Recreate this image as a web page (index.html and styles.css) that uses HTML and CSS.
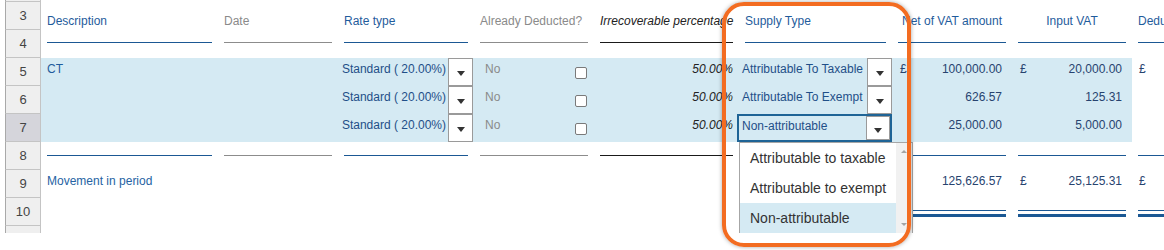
FILE: index.html
```html
<!DOCTYPE html>
<html>
<head>
<meta charset="utf-8">
<link rel="stylesheet" href="styles.css">
</head>
<body>
<div class="sheet">
  <div class="row top"><div class="rh"></div></div>

  <div class="row">
    <div class="rh">3</div>
    <div class="cells">
      <div class="hd blue">Description</div>
      <div class="hd gray">Date</div>
      <div class="hd blue">Rate type</div>
      <div class="hd gray">Already Deducted?</div>
      <div class="hd black it">Irrecoverable percentage</div>
      <div class="hd blue">Supply Type</div>
      <div class="hd blue center">Net of VAT amount</div>
      <div class="hd blue center">Input VAT</div>
      <div class="hd blue center">Deductible Input VAT</div>
    </div>
  </div>

  <div class="row">
    <div class="rh">4</div>
    <div class="cells">
      <div class="ul u-blue"></div>
      <div class="ul u-gray"></div>
      <div class="ul u-blue"></div>
      <div class="ul u-gray"></div>
      <div class="ul u-black"></div>
      <div class="ul u-blue"></div>
      <div class="ul u-blue"></div>
      <div class="ul u-blue"></div>
      <div class="ul u-blue"></div>
    </div>
  </div>

  <div class="row hl">
    <div class="rh">5</div>
    <div class="cells">
      <div class="dc desc">CT</div>
      <div class="dc"></div>
      <div class="rate"><span class="rtext">Standard ( 20.00%)</span><span class="btn"></span></div>
      <div class="ded"><span class="no">No</span><span class="chk"></span></div>
      <div class="dc pct">50.00%</div>
      <div class="sup"><span class="stext">Attributable To Taxable</span><span class="btn"></span></div>
      <div class="amt"><span>£</span><span>100,000.00</span></div>
      <div class="amt"><span>£</span><span>20,000.00</span></div>
      <div class="amt last"><span>£</span><span></span></div>
    </div>
  </div>

  <div class="row hl">
    <div class="rh">6</div>
    <div class="cells">
      <div class="dc desc"></div>
      <div class="dc"></div>
      <div class="rate"><span class="rtext">Standard ( 20.00%)</span><span class="btn"></span></div>
      <div class="ded"><span class="no">No</span><span class="chk"></span></div>
      <div class="dc pct">50.00%</div>
      <div class="sup"><span class="stext">Attributable To Exempt</span><span class="btn"></span></div>
      <div class="amt"><span></span><span>626.57</span></div>
      <div class="amt"><span></span><span>125.31</span></div>
      <div class="amt last"></div>
    </div>
  </div>

  <div class="row hl">
    <div class="rh sel">7</div>
    <div class="cells">
      <div class="dc desc"></div>
      <div class="dc"></div>
      <div class="rate"><span class="rtext">Standard ( 20.00%)</span><span class="btn"></span></div>
      <div class="ded"><span class="no">No</span><span class="chk"></span></div>
      <div class="dc pct">50.00%</div>
      <div class="sup focus"><span class="stext">Non-attributable</span><span class="btn"></span></div>
      <div class="amt"><span></span><span>25,000.00</span></div>
      <div class="amt"><span></span><span>5,000.00</span></div>
      <div class="amt last"></div>
    </div>
  </div>

  <div class="row">
    <div class="rh">8</div>
    <div class="cells">
      <div class="ul ul8 u-blue"></div>
      <div class="ul ul8 u-gray"></div>
      <div class="ul ul8 u-blue"></div>
      <div class="ul ul8 u-gray"></div>
      <div class="ul ul8 u-black"></div>
      <div class="ul ul8 u-blue"></div>
      <div class="ul ul8 u-blue"></div>
      <div class="ul ul8 u-blue"></div>
      <div class="ul ul8 u-blue"></div>
    </div>
  </div>

  <div class="row">
    <div class="rh">9</div>
    <div class="cells">
      <div class="dc desc mv">Movement in period</div>
      <div class="dc"></div>
      <div class="dc"></div>
      <div class="dc"></div>
      <div class="dc"></div>
      <div class="dc"></div>
      <div class="amt"><span>£</span><span>125,626.57</span></div>
      <div class="amt"><span>£</span><span>25,125.31</span></div>
      <div class="amt last"><span>£</span><span></span></div>
    </div>
  </div>

  <div class="row">
    <div class="rh">10</div>
    <div class="cells">
      <div></div><div></div><div></div><div></div><div></div><div></div>
      <div class="dbl"></div>
      <div class="dbl"></div>
      <div class="dbl"></div>
    </div>
  </div>

  <div class="row bottom"><div class="rh"></div></div>

  <div class="dd">
    <div class="items">
      <div class="item">Attributable to taxable</div>
      <div class="item">Attributable to exempt</div>
      <div class="item on">Non-attributable</div>
    </div>
    <div class="sb"><span class="up"></span><span class="down"></span></div>
  </div>

  <div class="callout"></div>
</div>
</body>
</html>
```

FILE: styles.css
```css
html, body {
  margin: 0;
  padding: 0;
  overflow: hidden;
  background: #ffffff;
}
body {
  width: 1164px;
  height: 250px;
  font-family: "Liberation Sans", Arial, sans-serif;
  font-size: 12px;
  color: #333;
}
.sheet {
  position: relative;
  width: 1400px;
}
.row {
  display: flex;
  height: 28px;
}
.row.top { height: 2px; }
.row.bottom { height: 7px; }
.rh {
  flex: none;
  width: 36px;
  margin-left: 5px;
  box-sizing: border-box;
  background: #efefef;
  border-left: 1px solid #a9a9a9;
  border-right: 1px solid #c4c4c4;
  border-bottom: 1px solid #c4c4c4;
  font-size: 13px;
  line-height: 28px;
  color: #444;
  text-align: center;
}
.row.bottom .rh { border-bottom: none; }
.rh.sel { background: #d5d5db; }
.cells {
  flex: none;
  display: grid;
  grid-template-columns: 165px 108px 124px 108px 133px 141px 108px 108px 108px;
  column-gap: 12px;
  padding-left: 6px;
  height: 28px;
}
.hl .cells {
  background: linear-gradient(to right, #d5eaf3 1091px, transparent 1091px);
}
.hd {
  padding-top: 12px;
  line-height: 14px;
  white-space: nowrap;
}
.center { text-align: center; }
.blue { color: #1f5c9c; }
.gray { color: #8a8a8a; }
.black { color: #222; }
.it { font-style: italic; }
.ul {
  margin-top: 12px;
  height: 0;
  border-top: 1px solid #1b5894;
}
.ul8 { margin-top: 13px; }
.u-blue { border-top-color: #1b5894; }
.u-gray { border-top-color: #8c8c8c; }
.u-black { border-top-color: #1a1a1a; }
.dc {
  padding-top: 4px;
  line-height: 14px;
  white-space: nowrap;
}
.desc { color: #1f5c9c; }
.mv { color: #2663a3; }
.rate {
  display: flex;
  justify-content: flex-end;
  margin-right: -5px;
}
.rtext {
  padding-top: 4px;
  line-height: 14px;
  white-space: nowrap;
  color: #1f4f88;
}
.btn {
  flex: none;
  width: 25px;
  height: 28px;
  box-sizing: border-box;
  border: 1px solid #9a9a9a;
  background: #ffffff;
  margin-left: 2px;
  display: flex;
  align-items: center;
  justify-content: center;
}
.btn::after {
  content: "";
  width: 0;
  height: 0;
  border-left: 4.5px solid transparent;
  border-right: 4.5px solid transparent;
  border-top: 5px solid #333;
  margin-top: 3px;
}
.ded {
  display: flex;
  justify-content: space-between;
}
.no {
  padding-left: 5px;
  padding-top: 4px;
  line-height: 14px;
  color: #8a8a8a;
}
.chk {
  width: 12px;
  height: 12px;
  box-sizing: border-box;
  margin-top: 9px;
  margin-right: 1px;
  border: 1px solid #7a7a7a;
  border-radius: 2px;
  background: #ffffff;
}
.pct {
  text-align: right;
  font-style: italic;
  color: #222;
}
.sup {
  display: flex;
  margin-left: -3px;
  margin-right: -6px;
}
.stext {
  flex: 1;
  padding-top: 4px;
  line-height: 14px;
  white-space: nowrap;
  color: #1f4f88;
}
.sup .btn { margin-left: 0; }
.sup.focus {
  margin-left: -8px;
  box-sizing: border-box;
  height: 28px;
  border: 2px solid #1f6496;
  padding-left: 3px;
}
.sup.focus .stext { padding-top: 3px; }
.sup.focus .btn {
  width: 24px;
  height: 24px;
}
.sup.focus .btn::after { margin-top: 5px; }
.amt {
  display: flex;
  justify-content: space-between;
  padding: 4px 4px 0 2px;
  line-height: 14px;
  color: #27436f;
}
.amt.last { padding-left: 1px; }
.dbl {
  margin-top: 12px;
  height: 3px;
  border-top: 1px solid #1b5894;
  border-bottom: 3px solid #1b5894;
}
.dd {
  position: absolute;
  left: 739px;
  top: 142px;
  width: 174px;
  height: 91px;
  box-sizing: border-box;
  border: 1px solid #a6a6a6;
  border-bottom: none;
  background: #ffffff;
  display: flex;
}
.items { flex: 1; }
.item {
  height: 30px;
  line-height: 30px;
  padding-left: 10px;
  font-size: 14px;
  color: #333;
  white-space: nowrap;
}
.item.on { background: #d5eaf3; }
.sb {
  width: 16px;
  background: #f1f1f1;
  display: flex;
  flex-direction: column;
  justify-content: space-between;
  align-items: center;
  padding: 7px 0 7px;
  box-sizing: border-box;
}
.up, .down {
  width: 0;
  height: 0;
  border-left: 3px solid transparent;
  border-right: 3px solid transparent;
}
.up { border-bottom: 3px solid #a3a3a3; }
.down { border-top: 3px solid #a3a3a3; }
.callout {
  position: absolute;
  left: 722px;
  top: 2px;
  width: 189px;
  height: 245px;
  box-sizing: border-box;
  border: 4px solid #f36c21;
  border-radius: 22px;
  box-shadow: 0 0 4px rgba(0, 0, 0, 0.35);
  pointer-events: none;
}
```
